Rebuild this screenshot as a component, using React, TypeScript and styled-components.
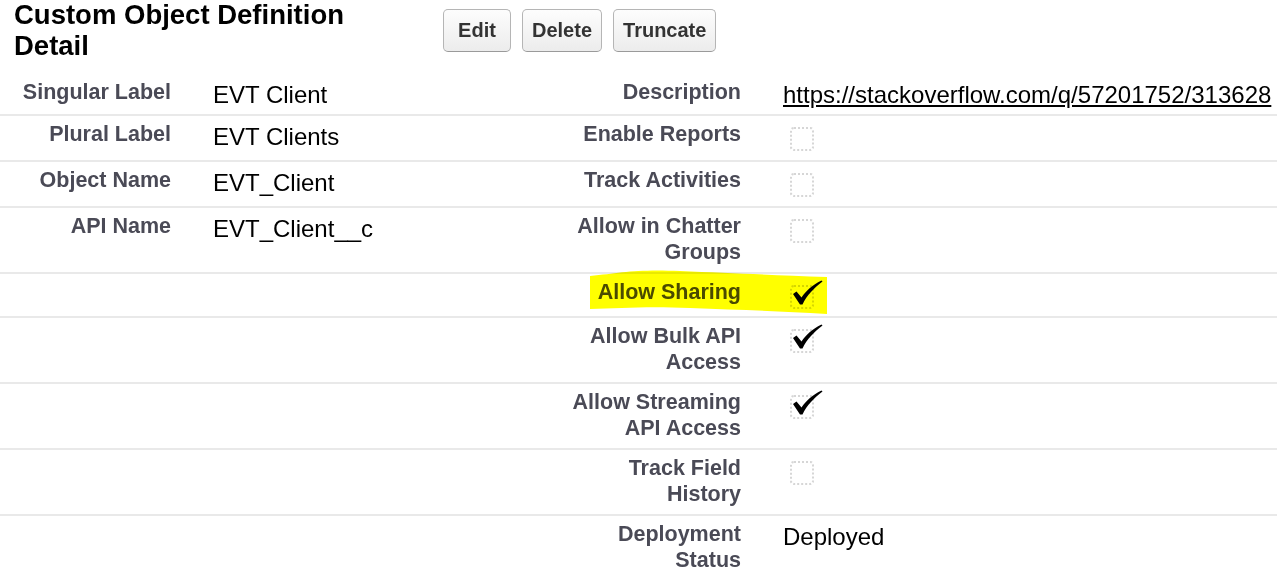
import React from 'react';
import styled, { createGlobalStyle } from 'styled-components';

const GlobalStyle = createGlobalStyle`
  html, body {
    margin: 0;
    padding: 0;
    background: #fff;
    font-family: "Liberation Sans", Arial, sans-serif;
  }
`;

const Page = styled.div`
  width: 1277px;
  overflow: hidden;
`;

const Header = styled.div`
  display: flex;
  align-items: flex-start;
  padding-left: 14px;
  height: 70px;
`;

const Title = styled.h2`
  margin: -1px 0 0;
  width: 400px;
  font-size: 27.5px;
  line-height: 31px;
  font-weight: bold;
  color: #000;
`;

const Buttons = styled.div`
  display: flex;
  gap: 11px;
  margin-left: 29px;
  margin-top: 9px;
`;

const Button = styled.button<{ $min?: number }>`
  height: 43px;
  min-width: ${(p) => (p.$min ? `${p.$min}px` : 'auto')};
  padding: 0 9px;
  border: 1px solid #b5b5b5;
  border-bottom-color: #9a9a9a;
  border-radius: 5px;
  background: linear-gradient(#fdfdfd, #ececec);
  font-family: "Liberation Sans", Arial, sans-serif;
  font-size: 20px;
  font-weight: bold;
  color: #333;
`;

// first row sits a little lower under the header, same total height
const Row = styled.div<{ $first?: boolean }>`
  position: relative;
  display: grid;
  grid-template-columns: 192px 368px 202px 1fr;
  padding: ${(p) => (p.$first ? '9px 0 3px' : '5px 0 7px')};
  border-bottom: 2px solid #e9e9e9;
`;

const Label = styled.div`
  padding-right: 21px;
  text-align: right;
  font-size: 21.5px;
  line-height: 26px;
  font-weight: bold;
  color: #4a4a56;
`;

const Value = styled.div`
  padding-left: 21px;
  font-size: 24px;
  line-height: 32px;
  color: #000;
`;

const Link = styled.a`
  color: #000;
  text-decoration: underline;
  white-space: nowrap;
`;

const Box = styled.span`
  position: relative;
  display: block;
  margin: 6px 0 0 7px;
  width: 20px;
  height: 20px;
  border: 2px dotted #d6d6d6;
  border-radius: 4px;
`;

const Tick = styled.svg`
  position: absolute;
  left: 0px;
  top: -7px;
`;

const Marker = styled.svg`
  position: absolute;
  left: 590px;
  top: -4px;
  mix-blend-mode: multiply;
  pointer-events: none;
`;

function Check({ on }: { on?: boolean }) {
  return (
    <Box>
      {on && (
        <Tick width="31" height="26" viewBox="0 0 31 26">
          <path
            d="M1 14 L4.5 11.5 L9.5 17.5 C14 11 20 5 29.5 0.5 L30.5 1.5 C22 8 15 15 10.5 24.5 L8 24.5 Z"
            fill="#000"
          />
        </Tick>
      )}
    </Box>
  );
}

type Field = {
  label?: string;
  value?: React.ReactNode;
  label2: string;
  value2: React.ReactNode;
  mark?: boolean;
};

const fields: Field[] = [
  {
    label: 'Singular Label',
    value: 'EVT Client',
    label2: 'Description',
    value2: <Link href="#">https://stackoverflow.com/q/57201752/313628</Link>,
  },
  { label: 'Plural Label', value: 'EVT Clients', label2: 'Enable Reports', value2: <Check /> },
  { label: 'Object Name', value: 'EVT_Client', label2: 'Track Activities', value2: <Check /> },
  { label: 'API Name', value: 'EVT_Client__c', label2: 'Allow in Chatter Groups', value2: <Check /> },
  { label2: 'Allow Sharing', value2: <Check on />, mark: true },
  { label2: 'Allow Bulk API Access', value2: <Check on /> },
  { label2: 'Allow Streaming API Access', value2: <Check on /> },
  { label2: 'Track Field History', value2: <Check /> },
  { label2: 'Deployment Status', value2: 'Deployed' },
];

export default function App() {
  return (
    <Page>
      <GlobalStyle />
      <Header>
        <Title>Custom Object Definition Detail</Title>
        <Buttons>
          <Button $min={68}>Edit</Button>
          <Button>Delete</Button>
          <Button>Truncate</Button>
        </Buttons>
      </Header>
      {fields.map((f, i) => (
        <Row key={f.label2} $first={i === 0}>
          <Label>{f.label}</Label>
          <Value>{f.value}</Value>
          <Label>{f.label2}</Label>
          <Value>{f.value2}</Value>
          {f.mark && (
            <Marker width="238" height="44" viewBox="0 0 238 44">
              <path
                d="M0 6 C30 3 45 -1 90 1 C140 3 180 5 237 7 L237 44 C190 41 150 40 100 38 C60 36 30 38 0 39 Z"
                fill="#ffff00"
              />
            </Marker>
          )}
        </Row>
      ))}
    </Page>
  );
}
